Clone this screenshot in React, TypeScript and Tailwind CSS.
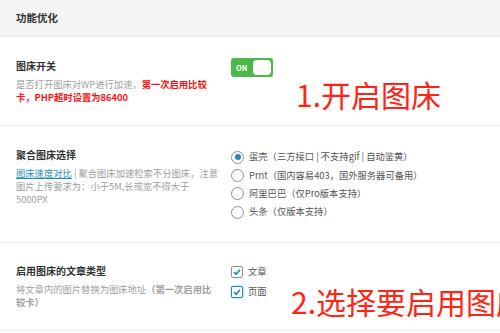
import { useState } from 'react'

const radios = [
  '蛋壳（三方接口 | 不支持gif | 自动鉴黄）',
  'Prnt（国内容易403，国外服务器可备用）',
  '阿里巴巴（仅Pro版本支持）',
  '头条（仅版本支持）',
]

export default function App() {
  const [enabled, setEnabled] = useState(true)
  const [picked, setPicked] = useState(0)
  const [types, setTypes] = useState({ post: true, page: true })

  return (
    <div className="relative w-[500px] h-[333px] overflow-hidden bg-white text-[#333] font-['Noto_Sans_CJK_SC',sans-serif]">
      <header className="h-[37px] bg-[#f5f5f5] border-b border-[#ebebeb] flex items-center px-4">
        <h1 className="text-[10.5px] font-bold text-[#333]">功能优化</h1>
      </header>

      {/* 图床开关 */}
      <section className="flex pl-4 pt-[21px] h-[89px] border-b border-[#f0f0f0]">
        <div className="w-[203px]">
          <h2 className="text-[10px] font-bold leading-[14px] mt-[1px] mb-[5px]">图床开关</h2>
          <p className="text-[9.3px] leading-[13px] text-[#a0a0a0]">
            是否打开图床对WP进行加速，<b className="text-[#ff1010]">第一次启用比较卡，PHP超时设置为86400</b>
          </p>
        </div>
        <div className="ml-[12px]">
          <button
            onClick={() => setEnabled(!enabled)}
            className="w-[42px] h-[19px] rounded-[3px] bg-[#4cb849] flex items-center justify-between pl-[5px] pr-[2px]"
          >
            <span className="text-[7.5px] font-bold text-white">ON</span>
            <span className="w-[18px] h-[15px] rounded-[4px] bg-white" />
          </button>
        </div>
      </section>

      {/* 聚合图床选择 */}
      <section className="flex pl-4 pt-[22px] h-[117px] border-b border-[#f0f0f0]">
        <div className="w-[203px]">
          <h2 className="text-[10px] font-bold leading-[14px] mb-[5px]">聚合图床选择</h2>
          <p className="text-[9.3px] leading-[13px] text-[#a0a0a0]">
            <a className="text-[#1e8cbe] underline">图床速度对比</a> | 聚合图床加速检索不分图床，注意图片上传要求为：小于5M,长或宽不得大于5000PX
          </p>
        </div>
        <div className="ml-[12px] flex flex-col">
          {radios.map((label, i) => (
            <label
              key={label}
              onClick={() => setPicked(i)}
              className="h-[18.4px] flex items-center gap-[5px] text-[9.3px] text-[#555]"
            >
              <span className="w-[13px] h-[13px] rounded-full border border-[#8c8f94] bg-white flex items-center justify-center">
                {picked === i && <span className="w-[6px] h-[6px] rounded-full bg-[#1e8cbe]" />}
              </span>
              {label}
            </label>
          ))}
        </div>
      </section>

      {/* 启用图床的文章类型 */}
      <section className="flex pl-4 pt-[21px] h-[88px] border-b border-[#f0f0f0]">
        <div className="w-[203px]">
          <h2 className="text-[10px] font-bold leading-[14px] mb-[5px]">启用图床的文章类型</h2>
          <p className="text-[9.3px] leading-[13px] text-[#a0a0a0]">
            将文章内的图片替换为图床地址<b>（第一次启用比较卡）</b>
          </p>
        </div>
        <div className="ml-[12px] flex flex-col gap-[6px] pt-[1px]">
          <label
            onClick={() => setTypes({ ...types, post: !types.post })}
            className="flex items-center gap-[5px] text-[9.3px] text-[#555]"
          >
            <span className="w-[12px] h-[12px] rounded-[2px] border border-[#8c8f94] bg-white flex items-center justify-center">
              {types.post && (
                <svg viewBox="0 0 12 12" className="w-[10px] h-[10px]" fill="none" stroke="#1e8cbe" strokeWidth={2}>
                  <path d="M2.5 6.2 5 8.6 9.6 3.2" />
                </svg>
              )}
            </span>
            文章
          </label>
          <label
            onClick={() => setTypes({ ...types, page: !types.page })}
            className="flex items-center gap-[5px] text-[9.3px] text-[#555]"
          >
            <span className="w-[12px] h-[12px] rounded-[2px] border border-[#1e8cbe] bg-white flex items-center justify-center shadow-[0_0_2px_rgba(30,140,190,0.8)]">
              {types.page && (
                <svg viewBox="0 0 12 12" className="w-[10px] h-[10px]" fill="none" stroke="#1e8cbe" strokeWidth={2}>
                  <path d="M2.5 6.2 5 8.6 9.6 3.2" />
                </svg>
              )}
            </span>
            页面
          </label>
        </div>
      </section>

      {/* annotations drawn over the screenshot */}
      <div className="absolute left-[296px] top-[76px] text-[30px] leading-[36px] text-[#ff2414] whitespace-nowrap">1.开启图床</div>
      <div className="absolute left-[291px] top-[283px] text-[30px] leading-[36px] text-[#ff2414] whitespace-nowrap">2.选择要启用图床</div>
    </div>
  )
}
